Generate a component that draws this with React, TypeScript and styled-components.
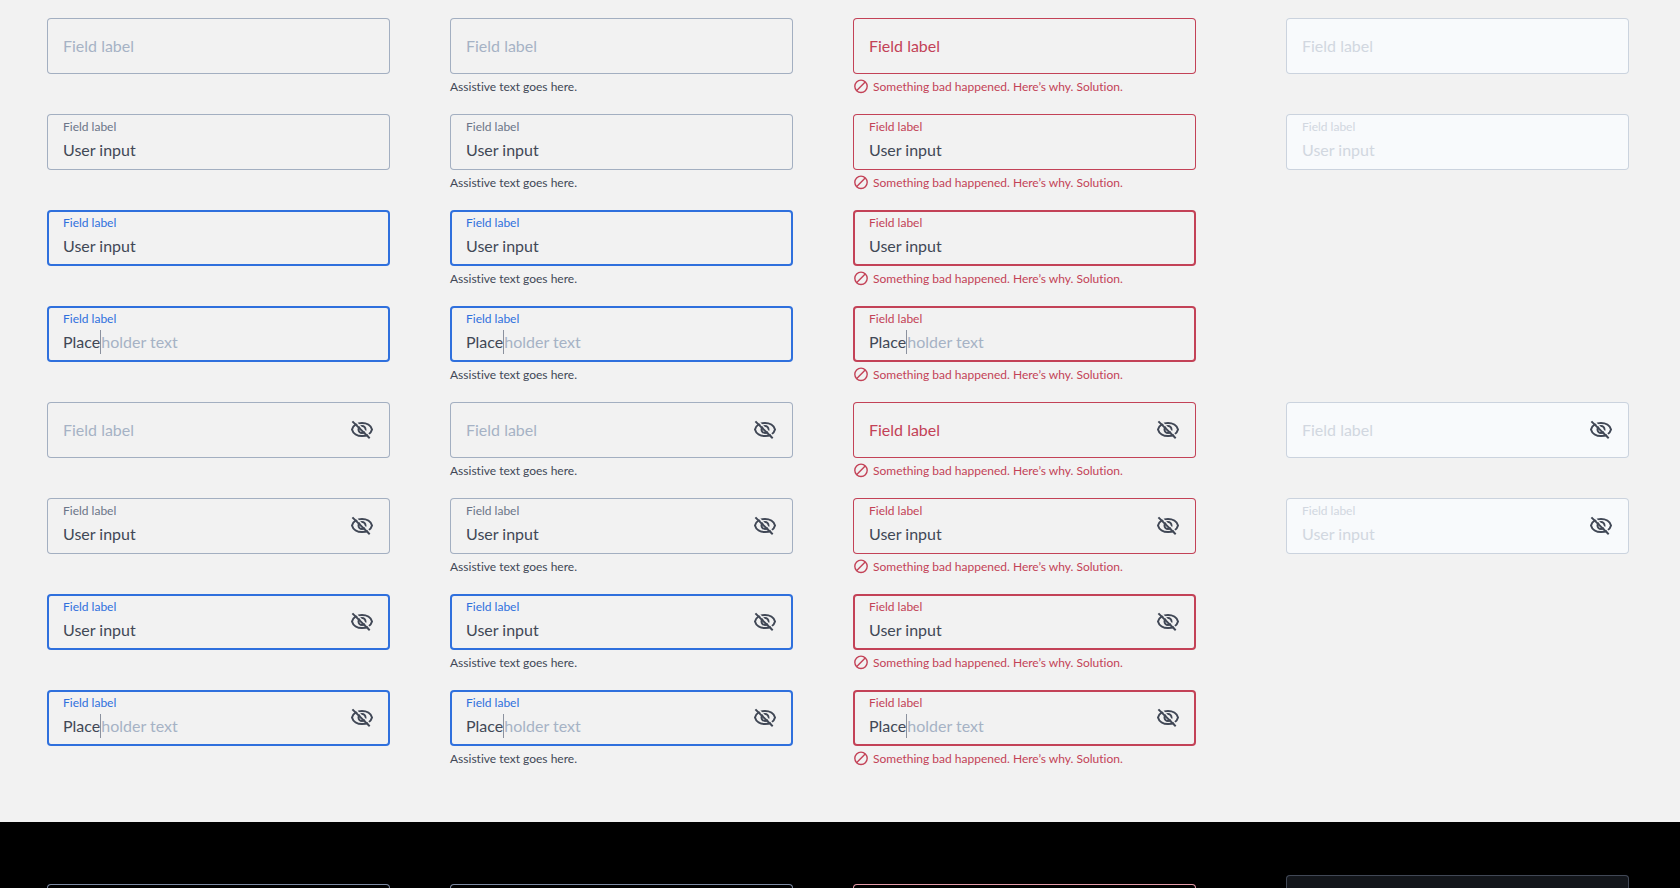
import React, { useId } from "react";
import styled, { createGlobalStyle, css } from "styled-components";

const GlobalStyle = createGlobalStyle`
  *, *::before, *::after { box-sizing: border-box; }
  html, body { margin: 0; background: #000000; }
  body {
    font-family: Lato, "Open Sans", sans-serif;
    font-variant-ligatures: none;
  }
`;

type Tone = "rest" | "focus" | "error" | "disabled" | "darkRest" | "darkError" | "darkDisabled";

const tones: Record<Tone, { border: string; fill: string; label: string; placeholder: string; text: string }> = {
  rest: { border: "#a3afc1", fill: "transparent", label: "#6b7588", placeholder: "#a6b2c5", text: "#414856" },
  focus: { border: "#2f70dd", fill: "transparent", label: "#2f70dd", placeholder: "#a6b2c5", text: "#414856" },
  error: { border: "#c34257", fill: "transparent", label: "#c34257", placeholder: "#c34257", text: "#414856" },
  disabled: { border: "#cbd3de", fill: "#f8fafc", label: "#d1d7e0", placeholder: "#d1d7e0", text: "#d1d7e0" },
  darkRest: { border: "#7d8aa3", fill: "transparent", label: "#a3b0c5", placeholder: "#a3b0c5", text: "#f1f1f1" },
  darkError: { border: "#e79aa8", fill: "transparent", label: "#e79aa8", placeholder: "#e79aa8", text: "#f1f1f1" },
  darkDisabled: { border: "#414856", fill: "#13161b", label: "#414856", placeholder: "#414856", text: "#414856" },
};

const Page = styled.main`
  height: 100vh;
  overflow-y: auto;
  scrollbar-width: none;
`;

const Section = styled.section<{ $dark?: boolean }>`
  display: flex;
  align-items: flex-start;
  gap: 60px;
  padding: ${(p) => (p.$dark ? "53px 51px 36px 47px" : "18px 51px 36px 47px")};
  background: ${(p) => (p.$dark ? "#000000" : "#f2f2f2")};
`;

const Column = styled.div<{ $apart?: boolean; $lowered?: boolean }>`
  flex: 1 1 0;
  min-width: 0;
  display: grid;
  grid-auto-rows: 96px;
  align-items: start;
  margin-left: ${(p) => (p.$apart ? "30px" : "0")};
  padding-top: ${(p) => (p.$lowered ? "9px" : "0")};
`;

const Cell = styled.div<{ $row: number }>`
  grid-row: ${(p) => p.$row};
`;

const Box = styled.div<{ $tone: Tone; $thick: boolean }>`
  display: flex;
  align-items: center;
  height: 56px;
  padding: 0 16px;
  border-radius: 4px;
  background: ${(p) => tones[p.$tone].fill};
  box-shadow: inset 0 0 0 ${(p) => (p.$thick ? "2px" : "1px")} ${(p) => tones[p.$tone].border};
`;

const Content = styled.div<{ $filled: boolean }>`
  flex: 1;
  min-width: 0;
  display: flex;
  flex-direction: column;
  gap: 2px;
  padding-bottom: ${(p) => (p.$filled ? "4px" : "0")};
`;

const FloatingLabel = styled.label<{ $tone: Tone }>`
  font-size: 12px;
  line-height: 18px;
  color: ${(p) => tones[p.$tone].label};
`;

const Line = styled.div`
  display: flex;
  height: 24px;
`;

const Input = styled.input<{ $tone: Tone; $typing?: boolean }>`
  flex: 1;
  min-width: 0;
  height: 24px;
  padding: 0;
  border: 0;
  outline: 0;
  background: transparent;
  font: 400 16px/24px Lato, "Open Sans", sans-serif;
  color: ${(p) => tones[p.$tone].text};
  &::placeholder {
    color: ${(p) => tones[p.$tone].placeholder};
    opacity: 1;
  }
  ${(p) =>
    p.$typing &&
    css`
      flex: none;
      field-sizing: content;
      border-right: 1px solid #8b919e;
    `}
`;

const Hint = styled.span`
  font-size: 16px;
  line-height: 24px;
  color: #a6b2c5;
`;

const IconButton = styled.button`
  display: flex;
  padding: 0;
  border: 0;
  background: none;
  color: #414856;
`;

const Helper = styled.p<{ $error: boolean }>`
  display: flex;
  align-items: center;
  gap: 4px;
  margin: 4px 0 0;
  font-size: 12px;
  line-height: 18px;
  color: ${(p) => (p.$error ? "#c34257" : "#414856")};
`;

const BlockedIcon = () => (
  <svg width="16" height="16" viewBox="0 0 16 16" fill="none" stroke="currentColor" strokeWidth="1.4" aria-hidden="true">
    <circle cx="8" cy="7.3" r="6.2" />
    <path d="M3.8 11.5 12.2 3.1" />
  </svg>
);

const HiddenIcon = () => {
  const id = useId();
  return (
    <svg width="24" height="24" viewBox="0 0 24 24" fill="none" stroke="currentColor" strokeWidth="2" aria-hidden="true">
      <mask id={id} maskUnits="userSpaceOnUse" x="0" y="0" width="24" height="24">
        <rect width="24" height="24" fill="#ffffff" stroke="none" />
        <path d="M3.4 1.6 22.4 20.2" stroke="#000000" strokeWidth="1.4" />
      </mask>
      <g mask={`url(#${id})`}>
        <path d="M2 11.5C3 7.4 7.4 5 12 5s9 2.4 10 6.5C21 15.6 16.6 18 12 18S3 15.6 2 11.5Z" />
        <circle cx="12" cy="11.5" r="3.5" />
      </g>
      <path d="M2.4 3.4 19.7 20.3" />
    </svg>
  );
};

type State = "empty" | "filled" | "typing";

interface FieldProps {
  row: number;
  state: State;
  tone: Tone;
  thick?: boolean;
  icon?: boolean;
  helper?: string;
}

function Field({ row, state, tone, thick = false, icon = false, helper }: FieldProps) {
  const id = useId();
  const disabled = tone === "disabled" || tone === "darkDisabled";
  const isError = tone === "error";
  return (
    <Cell $row={row}>
      <Box $tone={tone} $thick={thick}>
        <Content $filled={state !== "empty"}>
          {state !== "empty" && (
            <FloatingLabel htmlFor={id} $tone={tone}>
              Field label
            </FloatingLabel>
          )}
          <Line>
            <Input
              id={id}
              type="text"
              $tone={tone}
              $typing={state === "typing"}
              disabled={disabled}
              placeholder={state === "empty" ? "Field label" : undefined}
              aria-label={state === "empty" ? "Field label" : undefined}
              aria-invalid={isError || undefined}
              aria-describedby={helper ? `${id}-help` : undefined}
              defaultValue={state === "filled" ? "User input" : state === "typing" ? "Place" : ""}
            />
            {state === "typing" && <Hint>holder text</Hint>}
          </Line>
        </Content>
        {icon && (
          <IconButton type="button" aria-label="Show value">
            <HiddenIcon />
          </IconButton>
        )}
      </Box>
      {helper && (
        <Helper id={`${id}-help`} $error={isError}>
          {isError && <BlockedIcon />}
          {helper}
        </Helper>
      )}
    </Cell>
  );
}

const rows: { state: State; active: boolean; icon: boolean }[] = [
  { state: "empty", active: false, icon: false },
  { state: "filled", active: false, icon: false },
  { state: "filled", active: true, icon: false },
  { state: "typing", active: true, icon: false },
  { state: "empty", active: false, icon: true },
  { state: "filled", active: false, icon: true },
  { state: "filled", active: true, icon: true },
  { state: "typing", active: true, icon: true },
];

const assistive = "Assistive text goes here.";
const problem = "Something bad happened. Here’s why. Solution.";

export default function App() {
  return (
    <>
      <GlobalStyle />
      <Page>
        <Section>
          {[undefined, assistive].map((helper, c) => (
            <Column key={c}>
              {rows.map((r, i) => (
                <Field key={i} row={i + 1} state={r.state} icon={r.icon} thick={r.active} tone={r.active ? "focus" : "rest"} helper={helper} />
              ))}
            </Column>
          ))}
          <Column>
            {rows.map((r, i) => (
              <Field key={i} row={i + 1} state={r.state} icon={r.icon} thick={r.active} tone="error" helper={problem} />
            ))}
          </Column>
          <Column $apart>
            {rows.map((r, i) =>
              r.active ? null : <Field key={i} row={i + 1} state={r.state} icon={r.icon} tone="disabled" />
            )}
          </Column>
        </Section>
        <Section $dark>
          <Column $lowered>
            <Field row={1} state="empty" tone="darkRest" />
          </Column>
          <Column $lowered>
            <Field row={1} state="empty" tone="darkRest" />
          </Column>
          <Column $lowered>
            <Field row={1} state="empty" tone="darkError" />
          </Column>
          <Column $apart>
            <Field row={1} state="empty" tone="darkDisabled" />
          </Column>
        </Section>
      </Page>
    </>
  );
}
